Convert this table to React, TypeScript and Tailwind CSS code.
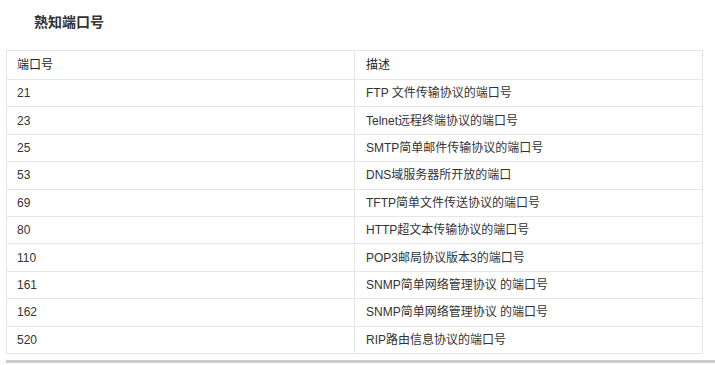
const rows: [string, string][] = [
  ['21', 'FTP 文件传输协议的端口号'],
  ['23', 'Telnet远程终端协议的端口号'],
  ['25', 'SMTP简单邮件传输协议的端口号'],
  ['53', 'DNS域服务器所开放的端口'],
  ['69', 'TFTP简单文件传送协议的端口号'],
  ['80', 'HTTP超文本传输协议的端口号'],
  ['110', 'POP3邮局协议版本3的端口号'],
  ['161', 'SNMP简单网络管理协议 的端口号'],
  ['162', 'SNMP简单网络管理协议 的端口号'],
  ['520', 'RIP路由信息协议的端口号'],
];

export default function App() {
  return (
    <div
      className="w-[715px] h-[365px] bg-white overflow-hidden"
      style={{ fontFamily: '"Liberation Sans", "Noto Sans CJK SC", sans-serif' }}
    >
      <h2 className="pl-[34px] pt-[13px] h-[50px] text-[14px] leading-[18px] font-bold text-[#333]">
        熟知端口号
      </h2>
      <div className="pl-[6px]">
        <table className="w-[697px] border-collapse text-[12px] text-[#333]">
          <thead>
            <tr className="h-[29px]">
              <th className="w-[348px] border border-[#e6e6e6] pl-[10px] text-left font-normal text-[#222]">
                端口号
              </th>
              <th className="border border-[#e6e6e6] pl-[11px] text-left font-normal text-[#222]">
                描述
              </th>
            </tr>
          </thead>
          <tbody>
            {rows.map(([port, desc]) => (
              <tr key={port} className="h-[27.4px]">
                <td className="border border-[#e6e6e6] pl-[10px]">{port}</td>
                <td className="border border-[#e6e6e6] pl-[11px]">{desc}</td>
              </tr>
            ))}
          </tbody>
        </table>
        <div className="mt-[6px] h-[3px] bg-[#cccccc]" />
      </div>
    </div>
  );
}
